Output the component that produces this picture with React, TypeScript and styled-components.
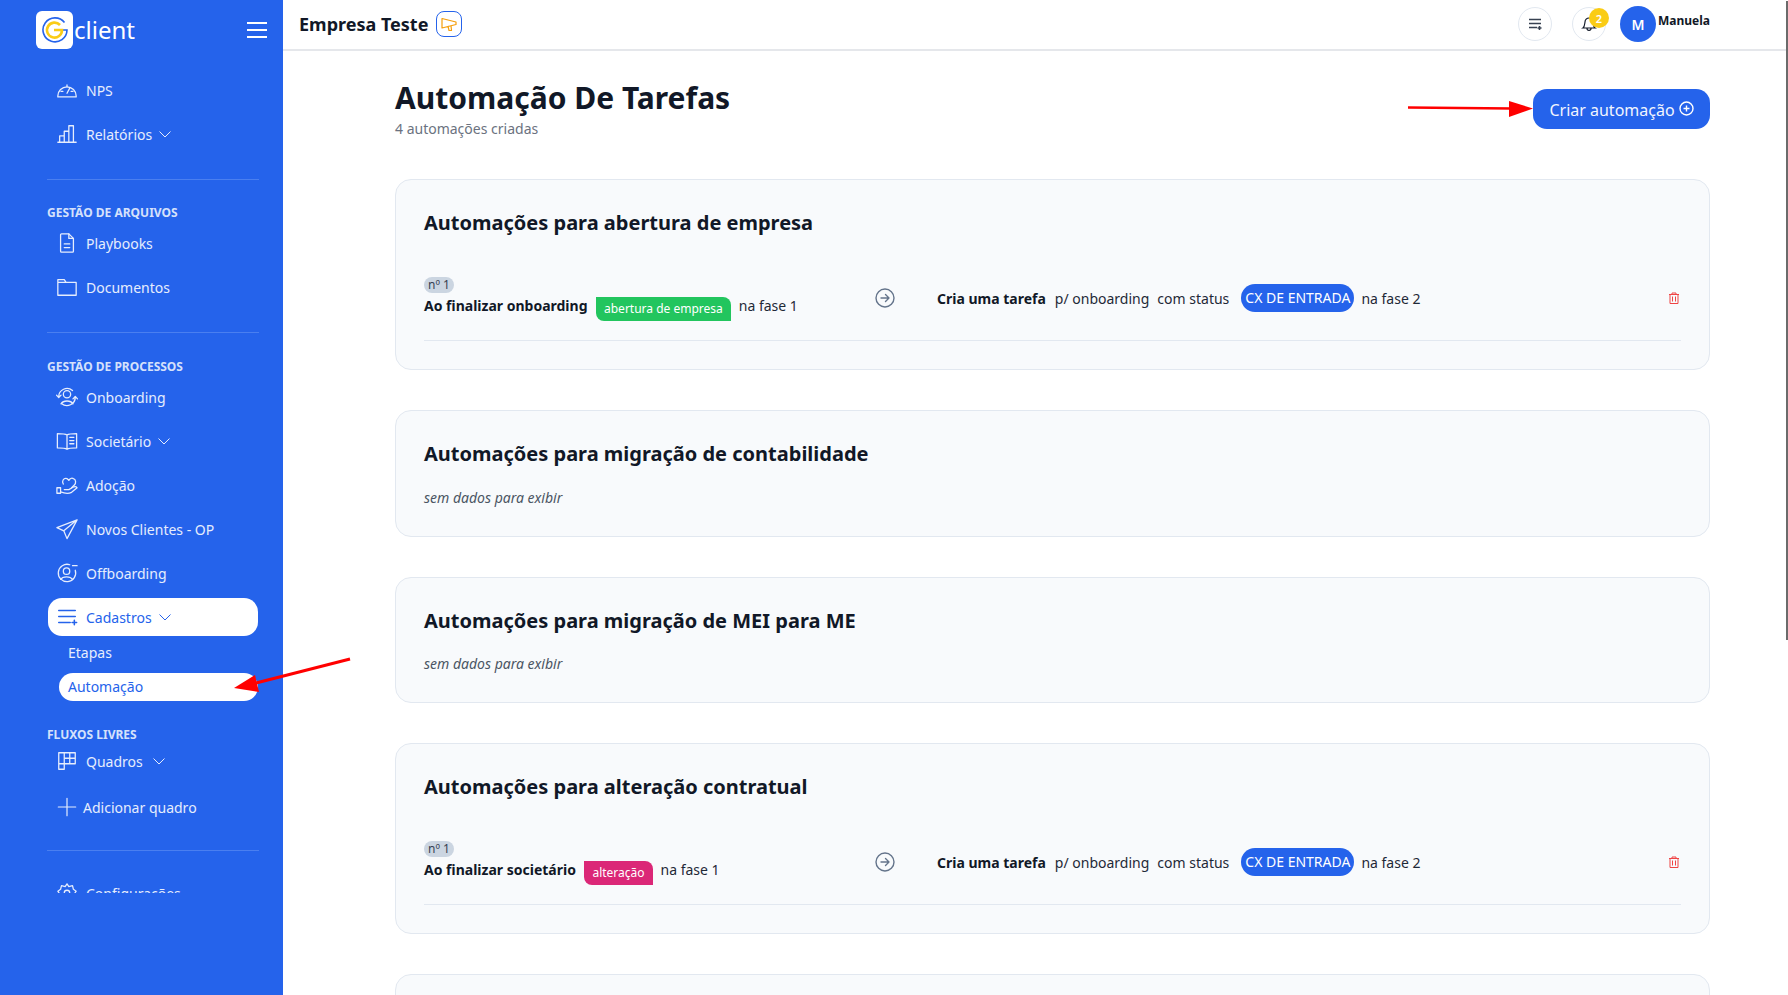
import React from "react";
import styled, { createGlobalStyle } from "styled-components";

const Global = createGlobalStyle`
  html, body { margin: 0; padding: 0; height: 100%; overflow: hidden; background: #fff; }
  body { font-family: "Noto Sans", "Open Sans", sans-serif; color: #111827; }
  * { box-sizing: border-box; }
`;
const Page = styled.div`display:flex;height:995px;width:1788px;overflow:hidden;position:relative;`;
const Side = styled.aside`width:283px;flex:none;background:#2563eb;display:flex;flex-direction:column;height:100%;`;
const Brand = styled.div`height:60px;flex:none;padding:11px 16px 0 36px;display:flex;align-items:flex-start;justify-content:space-between;`;
const LogoWrap = styled.div`display:flex;align-items:center;gap:1px;color:#fff;font-size:24px;line-height:38px;`;
const LogoTile = styled.div`width:37px;height:38px;border-radius:6px;background:#fff;display:flex;align-items:center;justify-content:center;`;
const Burger = styled.button`border:0;background:none;padding:0;margin-top:11px;width:20px;height:16px;display:flex;flex-direction:column;justify-content:space-between;span{display:block;height:2px;background:#fff;}`;
const Nav = styled.nav`height:833px;flex:none;overflow:hidden;padding:0 24px 0 47px;display:flex;flex-direction:column;`;
const Item = styled.div<{ $active?: boolean }>`
  height:38px;flex:none;margin-bottom:6px;margin-left:${p => p.$active ? "1px" : "0"};margin-right:${p => p.$active ? "1px" : "0"};padding-left:${p => p.$active ? "8px" : "9px"};display:flex;align-items:center;gap:8px;font-size:14px;border-radius:14px;
  color:${p => p.$active ? "#2563eb" : "#e6edfd"};background:${p => p.$active ? "#fff" : "transparent"};
  svg.i{width:22px;height:22px;flex:none;}
`;
const Chev = styled.svg<{ $wide?: boolean }>`width:12px;height:12px;margin-left:${p => p.$wide ? "2px" : "-1px"};flex:none;`;
const Divider = styled.hr`border:0;height:1px;background:#4a7ff0;margin:0;flex:none;`;
const Section = styled.div`font-size:12px;font-weight:700;line-height:16px;color:#d5e1fb;flex:none;`;
const SubItem = styled.div<{ $active?: boolean }>`
  flex:none;font-size:14px;height:28px;line-height:28px;padding-left:9px;border-radius:14px;margin-left:12px;margin-right:1px;
  color:${p => p.$active ? "#2563eb" : "#e6edfd"};background:${p => p.$active ? "#fff" : "transparent"};
`;
const Main = styled.main`flex:1;min-width:0;display:flex;flex-direction:column;`;
const Top = styled.header`height:51px;flex:none;border-bottom:2px solid #e5e7eb;padding:0 78px 0 16px;display:flex;align-items:center;justify-content:space-between;`;
const Left = styled.div`display:flex;align-items:center;gap:8px;font-size:18px;font-weight:700;color:#111827;margin-bottom:1px;`;
const Promo = styled.div`width:26px;height:26px;border:1px solid #2563eb;border-radius:8px;display:flex;align-items:center;justify-content:center;`;
const Right = styled.div`display:flex;align-items:flex-start;align-self:flex-start;padding-top:6px;`;
const Round = styled.div`width:34px;height:34px;margin-top:1px;border:1px solid #e2e8f0;border-radius:50%;display:flex;align-items:center;justify-content:center;position:relative;`;
const Badge = styled.span`position:absolute;top:0;left:16px;width:20px;height:20px;border-radius:50%;background:#facc15;color:#fff;font-size:11px;font-weight:600;display:flex;align-items:center;justify-content:center;`;
const Avatar = styled.div`width:36px;height:36px;border-radius:50%;background:#2563eb;color:#fff;font-weight:600;font-size:14px;display:flex;align-items:center;justify-content:center;`;
const UserName = styled.span`font-size:12px;font-weight:700;line-height:16px;margin:7px 0 0 2px;color:#111827;`;
const Content = styled.div`flex:1;overflow:hidden;padding:29px 78px 0 112px;`;
const Head = styled.div`display:flex;justify-content:space-between;align-items:flex-start;margin-bottom:40px;`;
const Title = styled.h1`margin:0;font-size:30px;line-height:36px;font-weight:700;color:#111827;`;
const Sub = styled.p`margin:3px 0 0;font-size:14px;line-height:20px;color:#6b7280;`;
const CreateBtn = styled.button`margin-top:9px;height:40px;width:177px;border:0;border-radius:14px;background:#2563eb;color:#f1f5fe;font:400 16px "Noto Sans",sans-serif;padding:1px 0 0;display:flex;align-items:center;justify-content:center;gap:4px;svg{position:relative;top:-1px;}`;
const Card = styled.section`border:1px solid #e2e8f0;border-radius:16px;background:#f8fafc;padding:29px 28px 0;margin-bottom:40px;flex:none;`;
const CardTitle = styled.h2`margin:0;font-size:20px;line-height:28px;font-weight:700;color:#111827;`;
const Empty = styled.p`margin:19.5px 0 0;font-size:14px;line-height:20px;font-style:italic;color:#4b5563;padding-bottom:28px;`;
const Row = styled.div`margin-top:27px;height:77px;border-bottom:1px solid #e2e8f0;margin-bottom:28px;display:flex;align-items:flex-start;position:relative;font-size:14px;color:#1f2937;`;
const Cond = styled.div`width:449px;flex:none;padding-top:13px;`;
const Num = styled.span`display:block;width:30px;height:16px;border-radius:8px;background:#cbd5e1;font-size:12px;line-height:16px;text-align:center;color:#374151;`;
const CondLine = styled.div`display:flex;align-items:center;gap:8px;height:25px;`;
const Bold = styled.b`font-weight:700;color:#111827;`;
const Tag = styled.span<{ $bg: string }>`display:inline-block;height:24px;line-height:24px;padding:0 8px 0 8.5px;font-size:12px;color:#fff;border-radius:0 8px 0 8px;background:${p => p.$bg};position:relative;top:3px;`;
const Arrow = styled.svg`position:absolute;left:451px;top:24px;width:20px;height:20px;`;
const Action = styled.div`display:flex;align-items:center;height:28px;top:20px;gap:8px;position:absolute;left:513px;b{margin-right:1px;}`;
const Status = styled.span`height:28px;line-height:28px;padding:0 4px;border-radius:14px;background:#2563eb;color:#fff;margin:0 -1px 0 4px;`;
const Trash = styled.svg`position:absolute;right:1px;top:28px;width:12px;height:12px;`;
const Overlay = styled.svg`position:absolute;left:0;top:0;width:1788px;height:995px;pointer-events:none;`;
const Track = styled.div`position:absolute;right:0;top:1px;width:2px;height:639px;background:#6b6b6b;`;

const S = (props: React.SVGProps<SVGSVGElement>) => <svg className="i" viewBox="0 0 24 24" fill="none" stroke="currentColor" strokeWidth={1.4} strokeLinecap="round" strokeLinejoin="round" {...props} />;
const Down = ({ wide }: { wide?: boolean }) => <Chev $wide={wide} viewBox="0 0 12 12" fill="none" stroke="currentColor" strokeWidth="1"><path d="M.5 3.500 6 9 11.500 3.500" /></Chev>;

const Gauge = () => <S><path d="M2 19.500v-1a10 10 0 1 1 20 0v1z" /><path d="m12 15.500 3-5.500M12 6.500v2M5.500 13.500H7.500M16.500 13.500h2" /></S>;
const Bars = () => <S><path d="M2 21h20M4 21v-7h5v7M9 21V9h5v12M14 21V3h5v18" /></S>;
const Doc = () => <S><path d="M6 2h8l5 5v14a1 1 0 0 1-1 1H6a1 1 0 0 1-1-1V3a1 1 0 0 1 1-1z" /><path d="M14 2v5h5M9 13h6M9 17h6" /></S>;
const Folder = () => <S><path d="M2 4h7l2 3h11v14H2zM2 7h9" /></S>;
const Onb = () => <S><circle cx="12" cy="9" r="4" /><path d="M5.500 19.500a7 5 0 0 1 13 0" /><path d="M3 12a9 9 0 0 1 15-7M21 12a9 9 0 0 1-15 7M.5 10l2.500 2.500L5.500 10M18.500 14l2.500-2.500 2.500 2.500" /></S>;
const Book = () => <S><path d="M12 5.500C10 4 6 4 1.500 4v15.500c4.500 0 8.500 0 10.500 1.500 2-1.500 6-1.500 10.500-1.500V4C18 4 14 4 12 5.500zM12 5.500V21M15 8h4.500M15 11.500h4.500M15 15h4.500" /></S>;
const Hand = () => <S><path d="M1 15h4v6H1zM5 19.500c5 2 9 2 12 .5l6-5c-1-1.500-2.500-1.500-4.500-.5l-4.500 2.500H9" /><path d="M8 11c-2-3 0-7 4-6 1 .5 1.500 1 2 2 1-2 3-3 5-2 3 1 3 5 1 7l-3 3" /></S>;
const Send = () => <S><path d="M23 2 1 10.500l7.500 3.500 3.500 8.500zM23 2 8.500 14" /></S>;
const Off = () => <S><path d="M21 9a9.500 9.500 0 1 1-6-6" /><circle cx="11.500" cy="10" r="3.500" /><path d="M5 19a7 4.500 0 0 1 13 0M18 4h5" /></S>;
const ListAdd = () => <S strokeWidth={1.7}><path d="M3 5h18M3 11.500h18M3 18h12.500M20 15.500v5M17.500 18h5" /></S>;
const Board = () => <S><path d="M3 3h18v12H3zM3 3h6v18H3zM15 3v12M9 9h12" /></S>;
const Gear = () => <S><circle cx="12" cy="12" r="3" /><path d="M12 2l2 3 4-1 1 4 3 2-2 3 2 3-3 2-1 4-4-1-2 3-2-3-4 1-1-4-3-2 2-3-2-3 3-2 1-4 4 1z" /></S>;
const Plus = () => <S strokeWidth={1.3}><path d="M12 2.500v19M2.500 12h19" /></S>;

const GoArrow = () => <Arrow viewBox="0 0 20 20" fill="none" stroke="#64748b" strokeWidth="1.400" strokeLinecap="round" strokeLinejoin="round"><circle cx="10" cy="10" r="9" /><path d="M6 10h8M10.500 6.500 14 10l-3.500 3.500" /></Arrow>;
const Bin = () => <Trash viewBox="0 0 12 12" fill="none" stroke="#ef4444" strokeWidth="1"><path d="M1 2.500h10M4 2.500V1h4v1.500M2 2.500h8V11.500H2zM4.500 4.500v5M7.500 4.500v5" /></Trash>;

function Rule({ event, tag, bg }: { event: string; tag: string; bg: string }) {
  return (
    <Row>
      <Cond>
        <Num>nº 1</Num>
        <CondLine><Bold>{event}</Bold><Tag $bg={bg}>{tag}</Tag><span>na fase 1</span></CondLine>
      </Cond>
      <GoArrow />
      <Action><Bold>Cria uma tarefa</Bold><span>p/ onboarding</span><span>com status</span><Status>CX DE ENTRADA</Status><span>na fase 2</span></Action>
      <Bin />
    </Row>
  );
}

export default function App() {
  return (
    <Page>
      <Global />
      <Side>
        <Brand>
          <LogoWrap>
            <LogoTile>
              <svg width="28" height="28" viewBox="0 0 28 28" fill="none">
                <path d="M23.500 6.500A12 12 0 1 0 26 14h-5" stroke="#2563eb" strokeWidth="1.600" />
                <path d="M19 9a7.500 7.500 0 1 0 2 5H13" stroke="#facc15" strokeWidth="2.600" />
              </svg>
            </LogoTile>
            <span>client</span>
          </LogoWrap>
          <Burger><span /><span /><span /></Burger>
        </Brand>
        <Nav>
          <Item style={{ marginTop: 11 }}><Gauge />NPS</Item>
          <Item><Bars />Relatórios<Down /></Item>
          <Divider style={{ marginTop: 20 }} />
          <Section style={{ marginTop: 25 }}>GESTÃO DE ARQUIVOS</Section>
          <Item style={{ marginTop: 3 }}><Doc />Playbooks</Item>
          <Item><Folder />Documentos</Item>
          <Divider style={{ marginTop: 20 }} />
          <Section style={{ marginTop: 26 }}>GESTÃO DE PROCESSOS</Section>
          <Item style={{ marginTop: 3 }}><Onb />Onboarding</Item>
          <Item><Book />Societário<Down /></Item>
          <Item><Hand />Adoção</Item>
          <Item><Send />Novos Clientes - OP</Item>
          <Item><Off />Offboarding</Item>
          <Item $active><ListAdd />Cadastros<Down /></Item>
          <SubItem style={{ marginTop: -3 }}>Etapas</SubItem>
          <SubItem $active style={{ marginTop: 6 }}>Automação</SubItem>
          <Section style={{ marginTop: 26 }}>FLUXOS LIVRES</Section>
          <Item style={{ marginTop: -1 }}><Board />Quadros<Down wide /></Item>
          <Item style={{ marginTop: 2, gap: 5 }}><Plus />Adicionar quadro</Item>
          <Divider style={{ marginTop: 18 }} />
          <Item style={{ marginTop: 23 }}><Gear />Configurações</Item>
        </Nav>
      </Side>
      <Main>
        <Top>
          <Left>
            Empresa Teste
            <Promo>
              <svg width="16" height="16" viewBox="0 0 16 16" fill="none" stroke="#f59e0b" strokeWidth="1.200" strokeLinejoin="round"><path d="M1 2.500 15 6v2.500L1 12zM7 10l1 4.500h2.500L10 9.500" /></svg>
            </Promo>
          </Left>
          <Right>
            <Round style={{ marginRight: 20 }}><svg width="16" height="16" viewBox="0 0 16 16" fill="none" stroke="#374151" strokeWidth="1.600"><path d="M2 3.500h12M2 7.500h12M2 11.500h8M12.500 10v4M10.500 12h4" /></svg></Round>
            <Round style={{ marginRight: 14 }}>
              <svg width="16" height="16" viewBox="0 0 16 16" fill="none" stroke="#111827" strokeWidth="1.200"><path d="M2 12c1.500-1 1.500-3 2-6a4 4 0 0 1 8 0c.5 3 .5 5 2 6zM6 12.500c0 2.500 4 2.500 4 0" /></svg>
              <Badge>2</Badge>
            </Round>
            <Avatar>M</Avatar>
            <UserName>Manuela</UserName>
          </Right>
        </Top>
        <Content>
          <Head>
            <div><Title>Automação De Tarefas</Title><Sub>4 automações criadas</Sub></div>
            <CreateBtn>Criar automação
              <svg width="15" height="15" viewBox="0 0 15 15" fill="none" stroke="#fff" strokeWidth="1.400"><circle cx="7.500" cy="7.500" r="6.500" /><path d="M7.500 4.500v6M4.500 7.500h6" /></svg>
            </CreateBtn>
          </Head>
          <Card><CardTitle>Automações para abertura de empresa</CardTitle><Rule event="Ao finalizar onboarding" tag="abertura de empresa" bg="#22c55e" /></Card>
          <Card><CardTitle>Automações para migração de contabilidade</CardTitle><Empty>sem dados para exibir</Empty></Card>
          <Card><CardTitle>Automações para migração de MEI para ME</CardTitle><Empty>sem dados para exibir</Empty></Card>
          <Card><CardTitle>Automações para alteração contratual</CardTitle><Rule event="Ao finalizar societário" tag="alteração" bg="#db2777" /></Card>
          <Card style={{ height: 100 }} />
        </Content>
      </Main>
      <Track />
      <Overlay viewBox="0 0 1788 995">
        <path d="M1408 107.500 1512 108.500" stroke="#f00" strokeWidth="2.500" fill="none" />
        <path d="M1509 101 1533 108.500 1509 117z" fill="#f00" />
        <path d="M350 659 256 683" stroke="#f00" strokeWidth="3" fill="none" />
        <path d="M234 688 255 675 259 692z" fill="#f00" />
      </Overlay>
    </Page>
  );
}
